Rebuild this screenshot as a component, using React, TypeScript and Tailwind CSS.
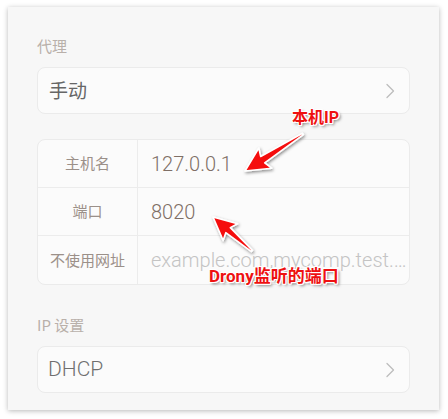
import React from "react";

type P = [number, number];

function arrowPoints(tail: P, tip: P, headLen: number, headHalf: number, neckHalf: number, tailHalf: number): string {
  const dx = tip[0] - tail[0];
  const dy = tip[1] - tail[1];
  const len = Math.hypot(dx, dy);
  const ux = dx / len;
  const uy = dy / len;
  const nx = -uy;
  const ny = ux;
  const N: P = [tip[0] - ux * headLen, tip[1] - uy * headLen];
  const B: P = [tip[0] - ux * (headLen + 3), tip[1] - uy * (headLen + 3)];
  const pts: P[] = [
    tip,
    [B[0] + nx * headHalf, B[1] + ny * headHalf],
    [N[0] + nx * neckHalf, N[1] + ny * neckHalf],
    [tail[0] + nx * tailHalf, tail[1] + ny * tailHalf],
    [tail[0] - nx * tailHalf, tail[1] - ny * tailHalf],
    [N[0] - nx * neckHalf, N[1] - ny * neckHalf],
    [B[0] - nx * headHalf, B[1] - ny * headHalf],
  ];
  return pts.map((p) => `${p[0].toFixed(1)},${p[1].toFixed(1)}`).join(" ");
}

const cjk = "font-['Noto_Sans_CJK_SC',sans-serif]";
const latin = "font-['Roboto','Noto_Sans_CJK_SC',sans-serif]";

function Chevron() {
  return (
    <svg width="10" height="16" viewBox="0 0 10 16" className="shrink-0">
      <polyline points="2,1.5 8.5,8 2,14.5" fill="none" stroke="#bdbdbd" strokeWidth="1.3" strokeLinecap="round" strokeLinejoin="round" />
    </svg>
  );
}

function Row({ label, value, placeholder, last }: { label: string; value: string; placeholder?: boolean; last?: boolean }) {
  return (
    <div className={`flex h-12 items-stretch ${last ? "" : "border-b border-[#ececec]"}`}>
      <div className={`flex w-[100px] shrink-0 items-center justify-center border-r border-[#ececec] text-[15px] text-[#9b9089] ${cjk}`}>
        {label}
      </div>
      <div
        className={`flex min-w-0 flex-1 items-center pl-[13px] text-[20px] font-light ${latin} ${
          placeholder ? "text-[#c4c4c4]" : "text-[#7f6f66]"
        }`}
      >
        <span className="truncate">{value}</span>
      </div>
    </div>
  );
}

const outline =
  "[text-shadow:1px_0_0_#fff,-1px_0_0_#fff,0_1px_0_#fff,0_-1px_0_#fff,1px_1px_0_#fff,-1px_-1px_0_#fff,1px_-1px_0_#fff,-1px_1px_0_#fff,2px_2px_3px_rgba(0,0,0,0.5)]";

export default function App() {
  return (
    <div className="relative h-[419px] w-[448px] overflow-hidden bg-white">
      <div className="ml-2 mt-[7px] flex h-[403px] w-[431px] flex-col bg-[#f7f7f7] px-[29px] pt-[29px] shadow-[0_1px_5px_rgba(0,0,0,0.28)]">
        <div className={`h-5 text-[15px] leading-5 text-[#b9b0aa] ${cjk}`}>代理</div>
        <div className="mt-[11px] flex h-[47px] items-center justify-between rounded-lg border border-[#ebebeb] bg-[#fbfbfb] pl-[11px] pr-[14px]">
          <span className={`text-[19px] text-[#666666] ${cjk}`}>手动</span>
          <Chevron />
        </div>
        <div className="mt-[25px] flex flex-col overflow-hidden rounded-lg border border-[#ebebeb] bg-[#fbfbfb]">
          <Row label="主机名" value="127.0.0.1" />
          <Row label="端口" value="8020" />
          <Row label="不使用网址" value="example.com,mycomp.test.com" placeholder last />
        </div>
        <div className={`mt-[30px] h-5 text-[15px] leading-5 text-[#b9b0aa] ${cjk}`}>IP 设置</div>
        <div className="mt-[11px] flex h-[47px] items-center justify-between rounded-lg border border-[#ebebeb] bg-[#fbfbfb] pl-[10px] pr-[14px]">
          <span className={`text-[21px] font-light text-[#6f6f6f] ${latin}`}>DHCP</span>
          <Chevron />
        </div>
      </div>

      <svg className="pointer-events-none absolute left-0 top-0" width="448" height="419" viewBox="0 0 448 419">
        <defs>
          <filter id="sh" x="-30%" y="-30%" width="160%" height="160%">
            <feDropShadow dx="1" dy="1.5" stdDeviation="1.5" floodColor="#000" floodOpacity="0.45" />
          </filter>
        </defs>
        <polygon
          points={arrowPoints([303, 134], [245, 171], 21, 12, 3.8, 0.8)}
          fill="#f50d0d"
          stroke="#ffffff"
          strokeWidth="1.6"
          strokeLinejoin="round"
          filter="url(#sh)"
        />
        <polygon
          points={arrowPoints([252, 251], [213, 217], 20, 11, 3.4, 0.8)}
          fill="#f50d0d"
          stroke="#ffffff"
          strokeWidth="1.6"
          strokeLinejoin="round"
          filter="url(#sh)"
        />
      </svg>

      <div className={`absolute left-[292px] top-[108px] text-[16px] font-bold leading-5 text-[#ee1111] ${outline} ${latin}`}>
        本机IP
      </div>
      <div className={`absolute left-[209px] top-[266px] text-[17px] font-bold leading-5 text-[#ee1111] ${outline} ${latin}`}>
        Drony监听的端口
      </div>
    </div>
  );
}
